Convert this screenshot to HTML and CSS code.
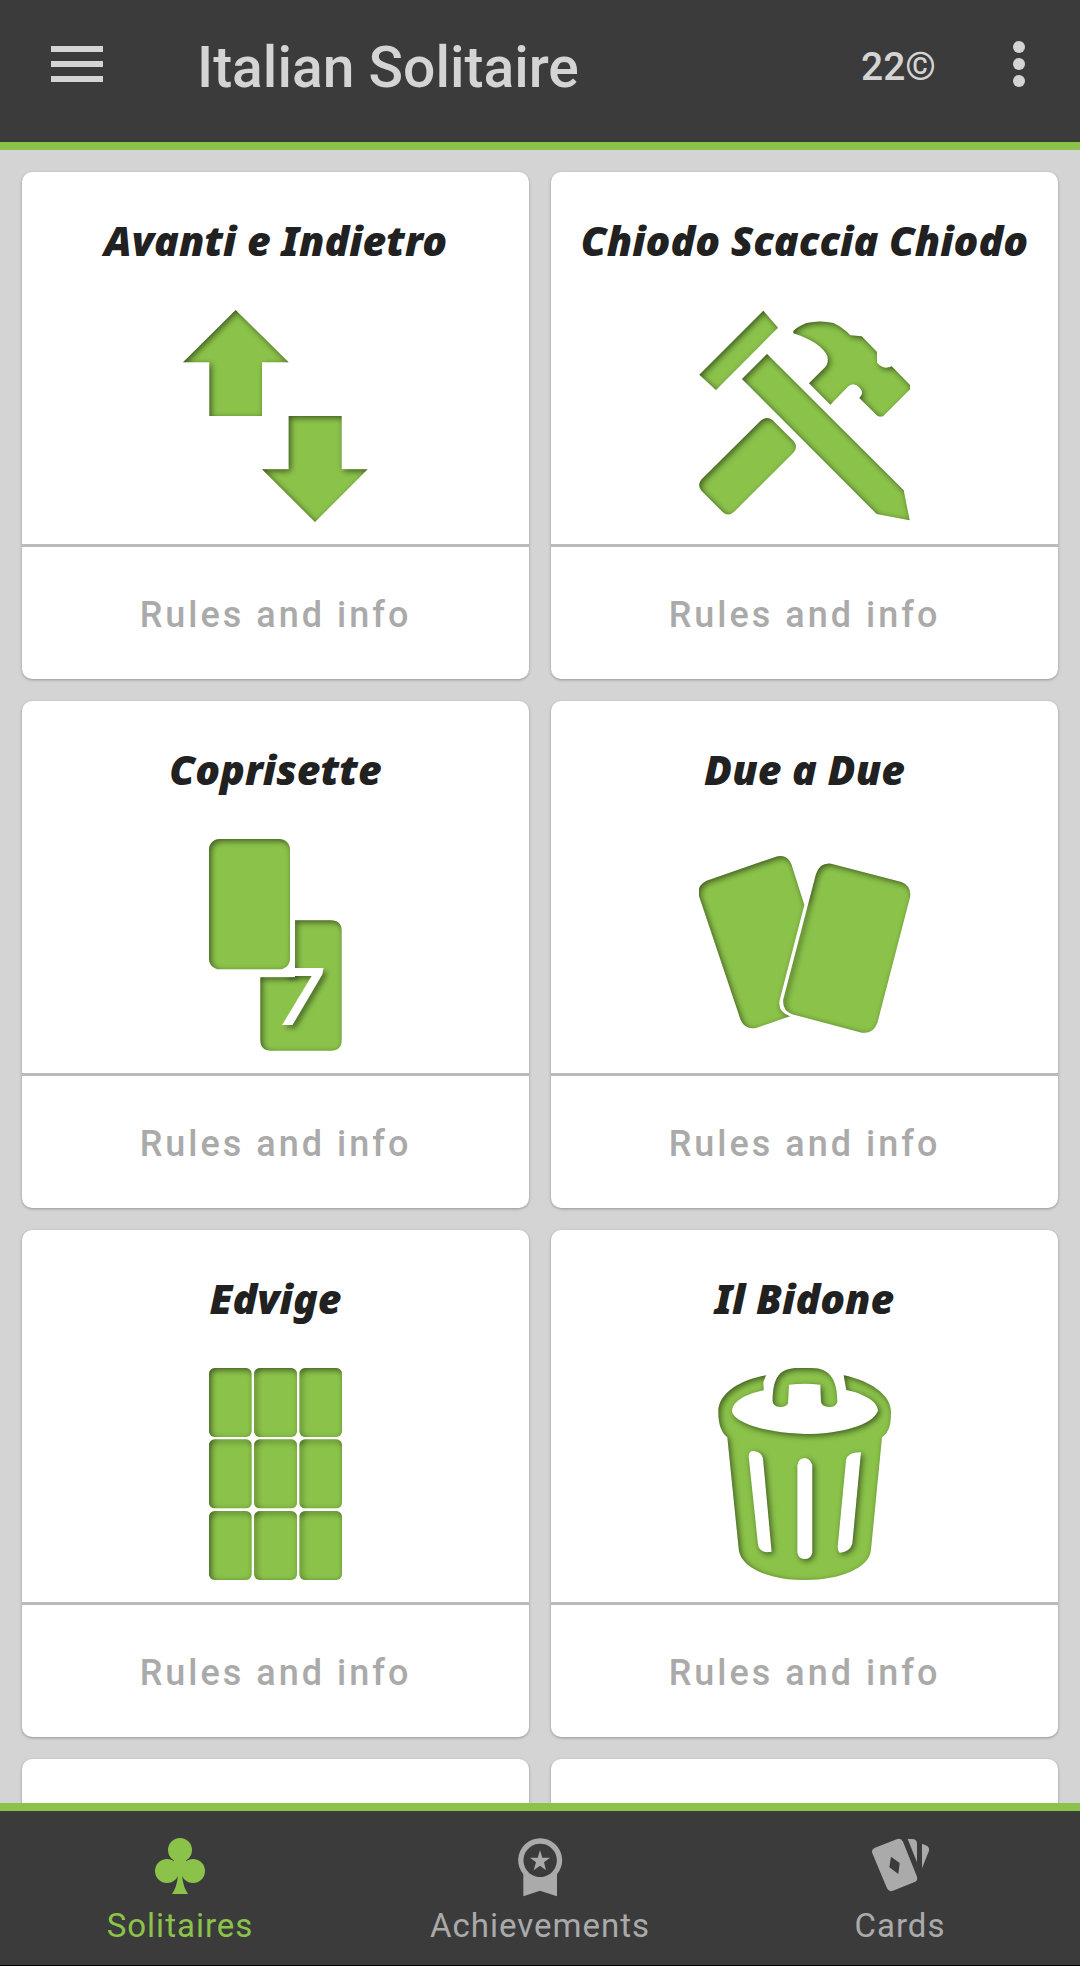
FILE: index.html
```html
<!DOCTYPE html>
<html lang="en">
<head>
    <meta charset="UTF-8">
    <meta name="viewport" content="width=device-width, initial-scale=1.0">
    <title>Italian Solitaire</title>
    <link rel="stylesheet" href="styles.css">
</head>
<body>
    <!-- Inner shadow shared by all the game icons -->
    <svg class="defs" width="0" height="0" aria-hidden="true">
        <filter id="carve" x="-10%" y="-10%" width="120%" height="120%" color-interpolation-filters="sRGB">
            <feComponentTransfer in="SourceAlpha" result="inverse">
                <feFuncA type="linear" slope="-1" intercept="1"/>
            </feComponentTransfer>
            <feGaussianBlur in="inverse" stdDeviation="10" result="blurred"/>
            <feOffset in="blurred" dx="7" dy="7" result="moved"/>
            <feComponentTransfer in="moved" result="soft">
                <feFuncA type="linear" slope="0.55"/>
            </feComponentTransfer>
            <feComposite in="soft" in2="SourceAlpha" operator="in" result="shadow"/>
            <feMerge>
                <feMergeNode in="SourceGraphic"/>
                <feMergeNode in="shadow"/>
            </feMerge>
        </filter>
    </svg>

    <header class="app-bar">
        <button class="icon-btn menu-btn" aria-label="Menu">
            <svg width="52" height="36" viewBox="0 0 52 36"><path d="M0 0h52v6H0zM0 15h52v6H0zM0 30h52v6H0z"/></svg>
        </button>
        <h1 class="app-title">Italian Solitaire</h1>
        <span class="credits">22©</span>
        <button class="icon-btn more-btn" aria-label="More options">
            <svg width="12" height="46" viewBox="0 0 12 46"><circle cx="6" cy="6" r="6"/><circle cx="6" cy="23" r="6"/><circle cx="6" cy="40" r="6"/></svg>
        </button>
    </header>

    <main class="games">
        <article class="card">
            <h2 class="card-title">Avanti e Indietro</h2>
            <svg class="art" viewBox="30 60 636 636">
                <g class="carved">
                    <path d="M227 60L386 217H306V378H148V217H69z"/>
                    <path d="M386 378H545V538H623L465 696L306 538H386z"/>
                </g>
            </svg>
            <button class="info-btn">Rules and info</button>
        </article>

        <article class="card">
            <h2 class="card-title">Chiodo Scaccia Chiodo</h2>
            <svg class="art" viewBox="57 60 636 636">
                <g class="carved">
                    <path d="M250 62L294 113L108 300L58 254z"/>
                    <path d="M261 192L671 601L689 691L590 672L186 267z"/>
                    <path d="M242 392Q260 376 278 391L340 452Q356 470 340 488L164 664Q146 682 128 666L65 603Q50 585 65 568z"/>
                    <path d="M340 123Q355 108 380 99Q420 90 460 99Q490 113 511 136L545 139L591 186V218Q612 241 635 229L690 285V298L610 378Q602 382 592 377L538 324Q554 308 540 294Q523 275 505 289L451 344L387 280L436 231Q447 218 442 198C430 170 390 146 340 130z"/>
                </g>
            </svg>
            <button class="info-btn">Rules and info</button>
        </article>

        <article class="card">
            <h2 class="card-title">Coprisette</h2>
            <svg class="art" viewBox="-30 57 636 636">
                <clipPath id="lower-card">
                    <path d="M345 301H452Q485 301 485 333V660Q485 692 452 692H274Q241 692 241 660V472H345z"/>
                </clipPath>
                <g class="carved">
                    <rect x="87" y="57" width="243" height="391" rx="32"/>
                    <path d="M345 301H452Q485 301 485 333V660Q485 692 452 692H274Q241 692 241 660V472H345z"/>
                </g>
                <g clip-path="url(#lower-card)">
                    <text class="seven" x="292" y="616">7</text>
                </g>
            </svg>
            <button class="info-btn">Rules and info</button>
        </article>

        <article class="card">
            <h2 class="card-title">Due a Due</h2>
            <svg class="art" viewBox="57 27 636 636">
                <g class="carved">
                    <path d="M80 152L288 80Q321 72 334 102L373 225L299 510Q292 545 330 559L228 594Q196 600 182 570L56 195Q50 167 80 152z"/>
                    <path d="M453 101L664 156Q695 168 690 202L592 579Q580 612 546 608L337 553Q306 542 310 508L408 132Q420 97 453 101z"/>
                </g>
            </svg>
            <button class="info-btn">Rules and info</button>
        </article>

        <article class="card">
            <h2 class="card-title">Edvige</h2>
            <svg class="art" viewBox="-30 54 636 636">
                <g class="carved">
                    <rect x="87" y="54" width="128" height="207" rx="17"/>
                    <rect x="222" y="54" width="129" height="207" rx="17"/>
                    <rect x="358" y="54" width="128" height="207" rx="17"/>
                    <rect x="87" y="268" width="128" height="207" rx="17"/>
                    <rect x="222" y="268" width="129" height="207" rx="17"/>
                    <rect x="358" y="268" width="128" height="207" rx="17"/>
                    <rect x="87" y="483" width="128" height="207" rx="17"/>
                    <rect x="222" y="483" width="129" height="207" rx="17"/>
                    <rect x="358" y="483" width="128" height="207" rx="17"/>
                </g>
            </svg>
            <button class="info-btn">Rules and info</button>
        </article>

        <article class="card">
            <h2 class="card-title">Il Bidone</h2>
            <svg class="art" viewBox="27 54 636 636">
                <g class="carved">
                    <path fill-rule="evenodd" d="M228 76C150 90 85 130 85 185C85 225 95 247 112 262L146 595C150 655 240 690 345 690C450 690 540 655 543 598L576 262C595 247 603 230 603 185C603 135 540 92 461 76L469 120C520 130 564 155 564 182C550 225 450 252 345 252C235 250 135 220 126 185C126 155 165 133 221 121L220 95z
                        M176 320Q176 303 190 303Q215 305 219 325L245 605Q210 612 204 585z
                        M322 346Q326 324 345 324Q362 326 367 346V608Q362 627 345 627Q326 627 322 608z
                        M513 307L487 582Q478 607 450 608Q443 604 443 590L468 330Q474 305 513 307z"/>
                    <path d="M248 155C248 80 270 54 325 54H365C420 54 442 90 442 155Q438 171 418 171Q395 169 393 155L391 104Q345 98 297 104L294 160Q290 171 270 171Q250 168 248 155z"/>
                </g>
            </svg>
            <button class="info-btn">Rules and info</button>
        </article>

        <article class="card"></article>
        <article class="card"></article>
    </main>

    <nav class="bottom-nav">
        <a class="nav-item active" href="#solitaires">
            <svg class="nav-icon" viewBox="0 0 72 72"><circle cx="36" cy="19" r="12"/><circle cx="23" cy="40" r="12"/><circle cx="49" cy="40" r="12"/><path d="M30 26h12v18h-4q1 12 6 19H28q5-7 6-19h-4z"/></svg>
            <span>Solitaires</span>
        </a>
        <a class="nav-item" href="#achievements">
            <svg class="nav-icon" viewBox="72 63 216 216"><path fill-rule="evenodd" d="M130 193A66 66 0 1 1 231 193V259L180 242L130 259zM180 101a50 50 0 1 0 1 0z"/><path d="M180 121L187 143H210L192 157L198 181L180 167L161 181L168 157L150 143H173z"/></svg>
            <span>Achievements</span>
        </a>
        <a class="nav-item" href="#cards">
            <svg class="nav-icon" viewBox="132 63 216 216"><path fill-rule="evenodd" d="M165 113L230 88Q243 83 249 95L291 200Q294 211 284 216L219 242Q207 247 201 235L157 130Q153 118 165 113zM213 140L208 172L235 192L239 159z"/><path d="M263 87H276Q291 87 291 102V157zM306 101L322 108Q329 113 327 122L306 175z"/></svg>
            <span>Cards</span>
        </a>
    </nav>
</body>
</html>
```
FILE: styles.css
```css
* {
    margin: 0;
    padding: 0;
    box-sizing: border-box;
}

body {
    height: 100vh;
    display: flex;
    flex-direction: column;
    font-family: Roboto, sans-serif;
    background: #d4d4d4;
    overflow: hidden;
}

button {
    border: none;
    background: none;
    font-family: inherit;
    cursor: pointer;
}

.defs {
    position: absolute;
}

/* Top bar */
.app-bar {
    flex: none;
    display: flex;
    align-items: center;
    height: 150px;
    padding: 0 55px 14px 51px;
    background: #3b3b3b;
    border-bottom: 8px solid #8bc34a;
    color: #d4d4d4;
}

.icon-btn svg {
    display: block;
    fill: #d4d4d4;
}

.app-title {
    flex: 1;
    margin-left: 94px;
    padding-top: 8px;
    font-size: 57px;
    font-weight: 500;
    line-height: 64px;
}

.credits {
    margin-right: 77px;
    padding-top: 6px;
    font-size: 39px;
    font-weight: 500;
}

/* Game list */
.games {
    flex: 1;
    min-height: 0;
    display: grid;
    grid-template-columns: 1fr 1fr;
    align-content: start;
    gap: 22px;
    padding: 22px;
    overflow: hidden;
}

.card {
    display: flex;
    flex-direction: column;
    align-items: center;
    min-height: 507px;
    padding-top: 44px;
    background: #fff;
    border-radius: 10px;
    box-shadow: 0 1px 3px rgba(0, 0, 0, 0.3);
}

.card-title {
    font-family: "Noto Sans", "Open Sans", sans-serif;
    font-size: 41px;
    font-weight: 900;
    font-style: italic;
    line-height: 48px;
    color: #212121;
    white-space: nowrap;
}

.art {
    width: 212px;
    height: 212px;
    margin: 46px 0 22px;
    fill: #8bc34a;
}

.carved {
    filter: url(#carve);
}

.seven {
    fill: #fff;
    font-family: "Open Sans", sans-serif;
    font-size: 240px;
    font-style: italic;
    font-weight: 600;
    filter: drop-shadow(10px 10px 8px rgba(0, 0, 0, 0.4));
}

.info-btn {
    width: 100%;
    height: 135px;
    padding-top: 4px;
    border-top: 3px solid #bbb;
    color: #aaa;
    font-size: 36px;
    font-weight: 500;
    letter-spacing: 3px;
}

/* Bottom navigation */
.bottom-nav {
    flex: none;
    display: flex;
    background: #3b3b3b;
    border-top: 8px solid #8bc34a;
    border-bottom: 1px solid #000;
}

.nav-item {
    flex: 1;
    display: flex;
    flex-direction: column;
    align-items: center;
    padding: 20px 0 16px;
    color: #aaa;
    font-size: 33px;
    line-height: 46px;
    letter-spacing: 1px;
    text-decoration: none;
}

.nav-icon {
    width: 72px;
    height: 72px;
    fill: currentColor;
}

.nav-item.active {
    color: #8bc34a;
}
```
